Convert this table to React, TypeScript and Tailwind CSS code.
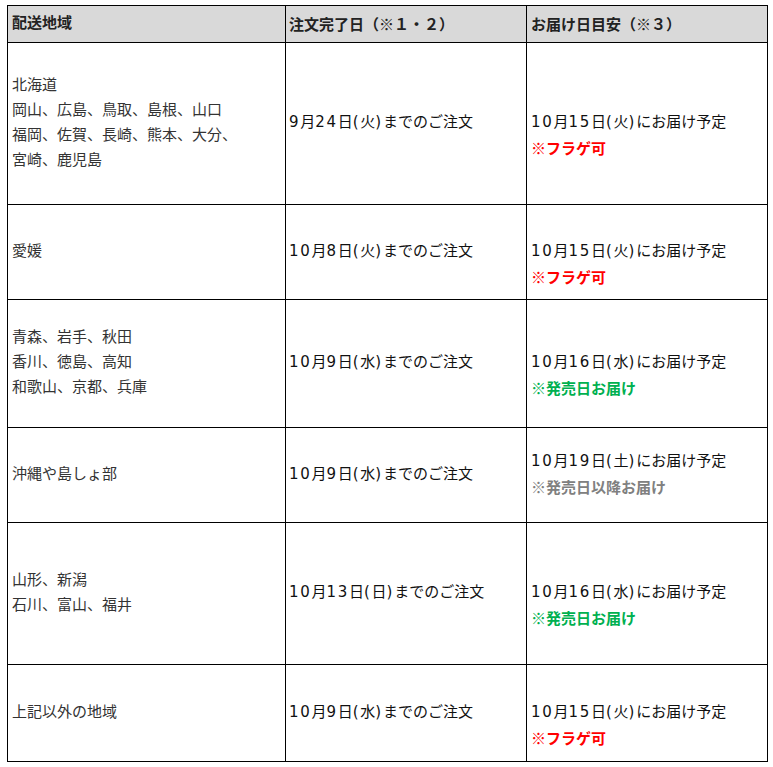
import React from "react";

const FONT = '"DejaVu Sans", "Noto Sans CJK JP", sans-serif';
const CJK = '"Noto Sans CJK JP", sans-serif';

type Note = { text: string; color: "red" | "green" | "gray" };

type Row = {
  h: string;
  areas: string[];
  order: string;
  lead: boolean;
  delivery: string;
  note: Note;
};

const rows: Row[] = [
  {
    h: "h-[161px]",
    areas: ["北海道", "岡山、広島、鳥取、島根、山口", "福岡、佐賀、長崎、熊本、大分、", "宮崎、鹿児島"],
    order: "9月24日(火)までのご注文",
    lead: true,
    delivery: "10月15日(火)にお届け予定",
    note: { text: "フラゲ可", color: "red" },
  },
  {
    h: "h-[94px]",
    areas: ["愛媛"],
    order: "10月8日(火)までのご注文",
    lead: true,
    delivery: "10月15日(火)にお届け予定",
    note: { text: "フラゲ可", color: "red" },
  },
  {
    h: "h-[127px]",
    areas: ["青森、岩手、秋田", "香川、徳島、高知", "和歌山、京都、兵庫"],
    order: "10月9日(水)までのご注文",
    lead: true,
    delivery: "10月16日(水)にお届け予定",
    note: { text: "発売日お届け", color: "green" },
  },
  {
    h: "h-[94px]",
    areas: ["沖縄や島しょ部"],
    order: "10月9日(水)までのご注文",
    lead: false,
    delivery: "10月19日(土)にお届け予定",
    note: { text: "発売日以降お届け", color: "gray" },
  },
  {
    h: "h-[141px]",
    areas: ["山形、新潟", "石川、富山、福井"],
    order: "10月13日(日)までのご注文",
    lead: true,
    delivery: "10月16日(水)にお届け予定",
    note: { text: "発売日お届け", color: "green" },
  },
  {
    h: "h-[96px]",
    areas: ["上記以外の地域"],
    order: "10月9日(水)までのご注文",
    lead: true,
    delivery: "10月15日(火)にお届け予定",
    note: { text: "フラゲ可", color: "red" },
  },
];

const noteColor: Record<Note["color"], string> = {
  red: "text-[#ff0000]",
  green: "text-[#00b050]",
  gray: "text-[#808080]",
};

function Wide({ text }: { text: string }) {
  const parts = text.split(/([0-9()]+)/).filter((p) => p.length > 0);
  return (
    <>
      {parts.map((p, i) =>
        /^[0-9()]+$/.test(p) ? (
          <span key={i} className="tracking-[1.7px]">
            {p}
          </span>
        ) : (
          <span key={i}>{p}</span>
        )
      )}
    </>
  );
}

export default function App() {
  return (
    <div className="min-h-[767px] bg-white pt-[5px] pl-[7px]" style={{ fontFamily: FONT }}>
      <div className="grid w-[761px] grid-cols-[277px_240px_240px] gap-px bg-black p-px text-[15px] leading-[25px]">
        <div className="flex h-[36px] items-center bg-[#d9d9d9] pb-[2px] pl-[4px] font-bold text-[#222]">配送地域</div>
        <div className="flex h-[36px] items-center bg-[#d9d9d9] pb-[2px] pl-[3px] font-bold text-[#222]" style={{ fontFamily: CJK }}>
          注文完了日（※１・２）
        </div>
        <div className="flex h-[36px] items-center bg-[#d9d9d9] pb-[2px] pl-[4px] font-bold text-[#222]" style={{ fontFamily: CJK }}>
          お届け日目安（※３）
        </div>
        {rows.map((r, i) => (
          <React.Fragment key={i}>
            <div className={`flex ${r.h} items-center bg-white pb-[2px] pl-[4px] text-[#333]`}>
              <div>
                {r.areas.map((a, j) => (
                  <div key={j}>{a}</div>
                ))}
              </div>
            </div>
            <div className={`flex ${r.h} items-center bg-white pb-[2px] pl-[3px] text-[#111]`}>
              <div>
                <Wide text={r.order} />
              </div>
            </div>
            <div className={`flex ${r.h} items-center bg-white pb-[2px] pl-[4px] text-[#111]`}>
              <div>
                {r.lead && <div>&nbsp;</div>}
                <div>
                  <Wide text={r.delivery} />
                </div>
                <div className={`font-bold ${noteColor[r.note.color]}`} style={{ fontFamily: CJK }}>
                  ※{r.note.text}
                </div>
              </div>
            </div>
          </React.Fragment>
        ))}
      </div>
    </div>
  );
}
